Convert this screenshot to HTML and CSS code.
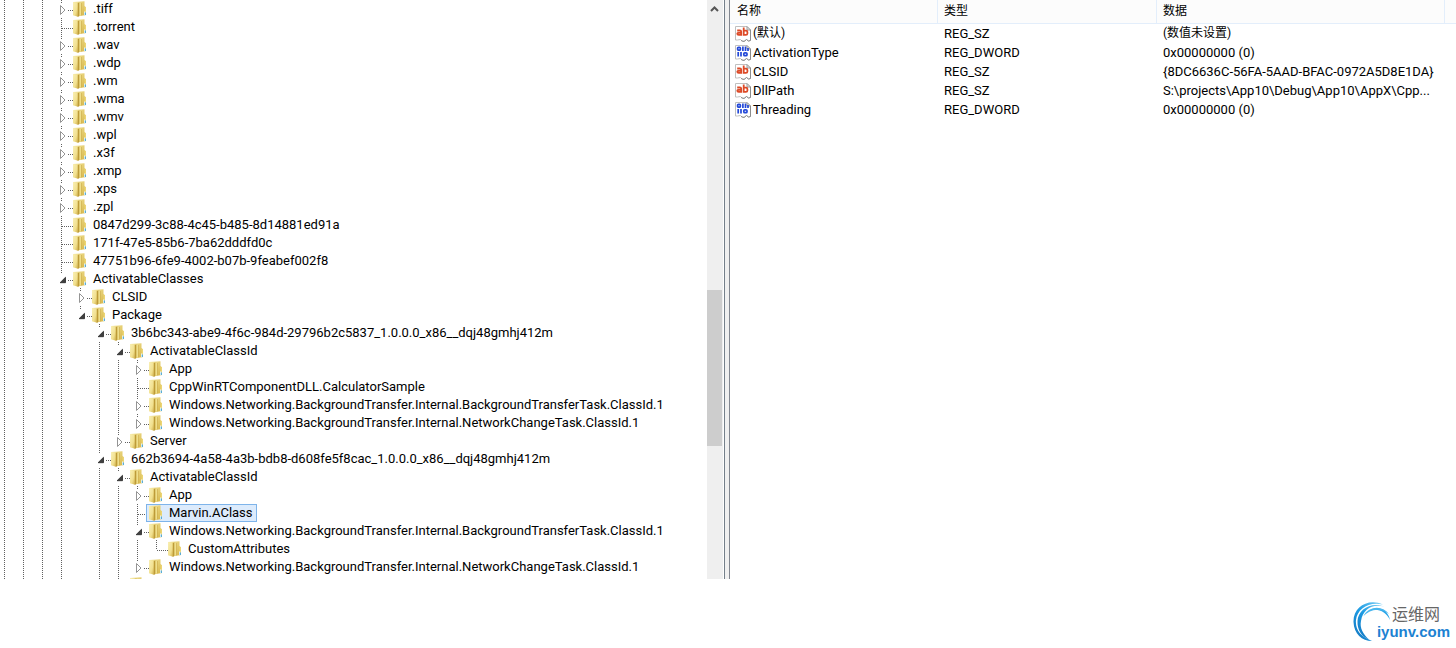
FILE: index.html
```html
<!DOCTYPE html>
<html lang="zh-CN">
<head>
<meta charset="utf-8">
<title>注册表编辑器</title>
<link rel="stylesheet" href="styles.css">
</head>
<body>
<svg class="defs" aria-hidden="true">
  <defs>
    <linearGradient id="gl" x1="0" x2="1" y1="0" y2="1"><stop offset="0" stop-color="#f9efb4"/><stop offset=".6" stop-color="#f1e08f"/><stop offset="1" stop-color="#cfae48"/></linearGradient>
    <linearGradient id="gr" x1="0" x2="1" y1="0" y2="1"><stop offset="0" stop-color="#f3e59a"/><stop offset="1" stop-color="#d6b547"/></linearGradient>
    <symbol id="folder" viewBox="0 0 14 16">
      <path d="M0 1 L11.5 0.3 L11.500 5 L13 6.500 L13 14 L7 15 L0 14 Z" fill="url(#gr)"/>
      <path d="M0 1 L4.500 1.500 L5 15.800 L0 14.300 Z" fill="url(#gl)"/>
      <path d="M4.800 2 L6.500 1.500 L6.500 15 L4.800 16 Z" fill="#bd9b38"/>
      <path d="M6.500 1.500 L8 2 L8 14.500 L6.500 15 Z" fill="#efdf8c"/>
      <path d="M8 2h.6v12.300h-.6z" fill="#cdae4e"/>
      <path d="M11.500 5 L13 6.500 L13 14 L11.500 14.300 Z" fill="#ecd574"/>
      <path d="M11 10.500h1.300v3.500h-1.300z" fill="#eaf6fb"/>
      <path d="M11.800 11.500h1.100v2.500h-1.100z" fill="#4ba7dc"/>
    </symbol>
    <symbol id="page" viewBox="0 0 16 16">
      <path d="M0.500 0.500h11.500l3.500 3.500v10.500l-2 0.500-2-1.500-2 1.500-2 0.500-2-2-3 0.500h-2z" fill="#fff" stroke="#c0c0c0"/>
      <path d="M12 0.500v3.500h3.500z" fill="#eee" stroke="#9a9a9a"/>
      <path d="M15.500 4v10.500l-2 0.500-2-1.500-2.500 2-3-1" fill="none" stroke="#8c8c8c"/>
    </symbol>
    <symbol id="str" viewBox="0 0 16 16">
      <use href="#page"/>
      <g fill="none" stroke="#dd4a27" stroke-width="1.800">
        <path d="M2.200 4.500h2.600q1.400 0 1.400 1.300v3.900M6.200 6.800h-2.500q-1.400 0-1.400 1t1.400 1h2.500"/>
        <path d="M8.700 1.500v8.200M8.700 4.700h2.200q1.500 0 1.500 1.400v1.300q0 1.400-1.500 1.400h-2.200"/>
      </g>
    </symbol>
    <symbol id="bin" viewBox="0 0 16 16">
      <use href="#page"/>
      <g fill="none" stroke="#2348d8" stroke-width="1.700">
        <rect x="2.600" y="2.300" width="2.800" height="2.900" rx="1"/>
        <path d="M7.900 1.500v4.500M10.500 1.500v4.500M13 3v3"/>
        <path d="M3.200 7v4.500M6 7v4.500"/>
        <rect x="8.800" y="7.800" width="3.200" height="2.900" rx="1"/>
      </g>
    </symbol>
    <symbol id="shut" viewBox="0 0 8 12"><path d="M1.500 1.500 L6 6 L1.500 10.500 Z" fill="#fff" stroke="#949494"/></symbol>
    <symbol id="open" viewBox="0 0 8 12"><path d="M6.500 3.300 V8.700 H1.100 Z" fill="#404040" stroke="#262626" stroke-width=".8"/></symbol>
  </defs>
</svg>

<main class="window">
  <nav class="tree" aria-label="注册表项">
    <ul class="level root">
      <li><div class="row"><button class="toggle" aria-label="展开"><svg><use href="#shut"/></svg></button><span class="node"><svg><use href="#folder"/></svg>.tiff</span></div></li>
      <li><div class="row"><span class="branch"></span><span class="node"><svg><use href="#folder"/></svg>.torrent</span></div></li>
      <li><div class="row"><button class="toggle" aria-label="展开"><svg><use href="#shut"/></svg></button><span class="node"><svg><use href="#folder"/></svg>.wav</span></div></li>
      <li><div class="row"><button class="toggle" aria-label="展开"><svg><use href="#shut"/></svg></button><span class="node"><svg><use href="#folder"/></svg>.wdp</span></div></li>
      <li><div class="row"><button class="toggle" aria-label="展开"><svg><use href="#shut"/></svg></button><span class="node"><svg><use href="#folder"/></svg>.wm</span></div></li>
      <li><div class="row"><button class="toggle" aria-label="展开"><svg><use href="#shut"/></svg></button><span class="node"><svg><use href="#folder"/></svg>.wma</span></div></li>
      <li><div class="row"><button class="toggle" aria-label="展开"><svg><use href="#shut"/></svg></button><span class="node"><svg><use href="#folder"/></svg>.wmv</span></div></li>
      <li><div class="row"><button class="toggle" aria-label="展开"><svg><use href="#shut"/></svg></button><span class="node"><svg><use href="#folder"/></svg>.wpl</span></div></li>
      <li><div class="row"><button class="toggle" aria-label="展开"><svg><use href="#shut"/></svg></button><span class="node"><svg><use href="#folder"/></svg>.x3f</span></div></li>
      <li><div class="row"><button class="toggle" aria-label="展开"><svg><use href="#shut"/></svg></button><span class="node"><svg><use href="#folder"/></svg>.xmp</span></div></li>
      <li><div class="row"><button class="toggle" aria-label="展开"><svg><use href="#shut"/></svg></button><span class="node"><svg><use href="#folder"/></svg>.xps</span></div></li>
      <li><div class="row"><button class="toggle" aria-label="展开"><svg><use href="#shut"/></svg></button><span class="node"><svg><use href="#folder"/></svg>.zpl</span></div></li>
      <li><div class="row"><span class="branch"></span><span class="node"><svg><use href="#folder"/></svg>0847d299-3c88-4c45-b485-8d14881ed91a</span></div></li>
      <li><div class="row"><span class="branch"></span><span class="node"><svg><use href="#folder"/></svg>171f-47e5-85b6-7ba62dddfd0c</span></div></li>
      <li><div class="row"><span class="branch"></span><span class="node"><svg><use href="#folder"/></svg>47751b96-6fe9-4002-b07b-9feabef002f8</span></div></li>
      <li><div class="row"><button class="toggle" aria-label="折叠"><svg><use href="#open"/></svg></button><span class="node"><svg><use href="#folder"/></svg>ActivatableClasses</span></div>
        <ul class="level">
          <li><div class="row"><button class="toggle" aria-label="展开"><svg><use href="#shut"/></svg></button><span class="node"><svg><use href="#folder"/></svg>CLSID</span></div></li>
          <li class="last"><div class="row"><button class="toggle" aria-label="折叠"><svg><use href="#open"/></svg></button><span class="node"><svg><use href="#folder"/></svg>Package</span></div>
            <ul class="level">
              <li><div class="row"><button class="toggle" aria-label="折叠"><svg><use href="#open"/></svg></button><span class="node"><svg><use href="#folder"/></svg>3b6bc343-abe9-4f6c-984d-29796b2c5837_1.0.0.0_x86__dqj48gmhj412m</span></div>
                <ul class="level">
                  <li><div class="row"><button class="toggle" aria-label="折叠"><svg><use href="#open"/></svg></button><span class="node"><svg><use href="#folder"/></svg>ActivatableClassId</span></div>
                    <ul class="level">
                      <li><div class="row"><button class="toggle" aria-label="展开"><svg><use href="#shut"/></svg></button><span class="node"><svg><use href="#folder"/></svg>App</span></div></li>
                      <li><div class="row"><span class="branch"></span><span class="node"><svg><use href="#folder"/></svg>CppWinRTComponentDLL.CalculatorSample</span></div></li>
                      <li><div class="row"><button class="toggle" aria-label="展开"><svg><use href="#shut"/></svg></button><span class="node"><svg><use href="#folder"/></svg>Windows.Networking.BackgroundTransfer.Internal.BackgroundTransferTask.ClassId.1</span></div></li>
                      <li class="last"><div class="row"><button class="toggle" aria-label="展开"><svg><use href="#shut"/></svg></button><span class="node"><svg><use href="#folder"/></svg>Windows.Networking.BackgroundTransfer.Internal.NetworkChangeTask.ClassId.1</span></div></li>
                    </ul>
                  </li>
                  <li class="last"><div class="row"><button class="toggle" aria-label="展开"><svg><use href="#shut"/></svg></button><span class="node"><svg><use href="#folder"/></svg>Server</span></div></li>
                </ul>
              </li>
              <li><div class="row"><button class="toggle" aria-label="折叠"><svg><use href="#open"/></svg></button><span class="node"><svg><use href="#folder"/></svg>662b3694-4a58-4a3b-bdb8-d608fe5f8cac_1.0.0.0_x86__dqj48gmhj412m</span></div>
                <ul class="level">
                  <li><div class="row"><button class="toggle" aria-label="折叠"><svg><use href="#open"/></svg></button><span class="node"><svg><use href="#folder"/></svg>ActivatableClassId</span></div>
                    <ul class="level">
                      <li><div class="row"><button class="toggle" aria-label="展开"><svg><use href="#shut"/></svg></button><span class="node"><svg><use href="#folder"/></svg>App</span></div></li>
                      <li><div class="row"><span class="branch"></span><span class="node selected"><svg><use href="#folder"/></svg>Marvin.AClass</span></div></li>
                      <li><div class="row"><button class="toggle" aria-label="折叠"><svg><use href="#open"/></svg></button><span class="node"><svg><use href="#folder"/></svg>Windows.Networking.BackgroundTransfer.Internal.BackgroundTransferTask.ClassId.1</span></div>
                        <ul class="level">
                          <li class="last"><div class="row"><span class="branch"></span><span class="node"><svg><use href="#folder"/></svg>CustomAttributes</span></div></li>
                        </ul>
                      </li>
                      <li class="last"><div class="row"><button class="toggle" aria-label="展开"><svg><use href="#shut"/></svg></button><span class="node"><svg><use href="#folder"/></svg>Windows.Networking.BackgroundTransfer.Internal.NetworkChangeTask.ClassId.1</span></div></li>
                    </ul>
                  </li>
                  <li class="last"><div class="row"><span class="branch"></span><span class="node"><svg><use href="#folder"/></svg></span></div></li>
                </ul>
              </li>
            </ul>
          </li>
        </ul>
      </li>
    </ul>
  </nav>

  <div class="scrollbar">
    <button class="scroll-up" aria-label="向上滚动"><svg viewBox="0 0 9 6"><path d="M1 5 L4.500 1.500 L8 5" fill="none" stroke="#555" stroke-width="2"/></svg></button>
    <div class="before"></div>
    <div class="thumb"></div>
    <div class="after"></div>
  </div>
  <div class="splitter"></div>

  <section class="values">
    <table>
      <colgroup><col class="c-name"><col class="c-type"><col class="c-data"><col class="c-rest"></colgroup>
      <thead><tr><th class="zh">名称</th><th class="zh">类型</th><th class="zh">数据</th><td></td></tr></thead>
      <tbody>
        <tr><td><span class="value"><svg><use href="#str"/></svg><span class="zh">(默认)</span></span></td><td>REG_SZ</td><td class="zh">(数值未设置)</td><td></td></tr>
        <tr><td><span class="value"><svg><use href="#bin"/></svg>ActivationType</span></td><td>REG_DWORD</td><td>0x00000000 (0)</td><td></td></tr>
        <tr><td><span class="value"><svg><use href="#str"/></svg>CLSID</span></td><td>REG_SZ</td><td>{8DC6636C-56FA-5AAD-BFAC-0972A5D8E1DA}</td><td></td></tr>
        <tr><td><span class="value"><svg><use href="#str"/></svg>DllPath</span></td><td>REG_SZ</td><td>S:\projects\App10\Debug\App10\AppX\Cpp...</td><td></td></tr>
        <tr><td><span class="value"><svg><use href="#bin"/></svg>Threading</span></td><td>REG_DWORD</td><td>0x00000000 (0)</td><td></td></tr>
      </tbody>
    </table>
  </section>
</main>

<footer class="footer">
  <div class="brand">
    <svg class="swirl" viewBox="0 0 38 41" aria-hidden="true">
      <defs><linearGradient id="sw" x1="0" y1="1" x2="1" y2="0"><stop offset="0" stop-color="#1272bd"/><stop offset=".5" stop-color="#1e9de4"/><stop offset="1" stop-color="#7fd0f6"/></linearGradient></defs>
      <path d="M30 3.500 C15 -3 0 6 0.500 21 C1 33 9 40 19 40 C8 36 2 29 3 19 C4 8 16 0 30 3.500 Z" fill="url(#sw)"/>
      <path d="M32 6 C19 0 5 8 4.500 20 C4 29 9 36 16 38.500 C10 33 6.500 27 8 20 C10 8 20 2 32 6 Z" fill="url(#sw)"/>
      <path d="M37 19 C35 8 24 4 16 10 C24 6.500 33 10 37 19 Z" fill="#2aa5e8"/>
      <path d="M36 13 C29 4 16 5 10.500 15 C17 8 27 6 36 13 Z" fill="#49b6ee"/>
    </svg>
    <div class="brand-text"><span class="brand-cn">运维网</span><span class="brand-url">iyunv.com</span></div>
  </div>
</footer>
</body>
</html>
```

FILE: styles.css
```css
* { box-sizing: border-box; }

body {
  margin: 0;
  height: 100vh;
  display: flex;
  flex-direction: column;
  overflow: hidden;
  background: #fff;
  color: #000;
  font: 13px/18px Roboto, "Noto Sans CJK SC", sans-serif;
}

.defs { position: absolute; width: 0; height: 0; }

.window {
  flex: 1;
  min-height: 0;
  display: grid;
  grid-template-columns: 707fr 17px 6px 726fr;
  grid-template-rows: minmax(0, 1fr);
}

.tree { overflow: hidden; }

.level {
  list-style: none;
  margin: 0;
  padding: 0 0 0 19px;
}

.level li {
  background: repeating-linear-gradient(#606060 0 1px, transparent 1px 2px) 4px 0 / 1px 100% no-repeat;
}

.level li.last { background-size: 1px 10px; }

/* ancestor guide lines left of the first visible level */
.root {
  padding-left: 57px;
  background:
    repeating-linear-gradient(#606060 0 1px, transparent 1px 2px) 4px 0 / 1px 100% no-repeat,
    repeating-linear-gradient(#606060 0 1px, transparent 1px 2px) 23px 0 / 1px 100% no-repeat,
    repeating-linear-gradient(#606060 0 1px, transparent 1px 2px) 42px 0 / 1px 100% no-repeat;
}

.row {
  display: flex;
  height: 18px;
  white-space: nowrap;
  background: repeating-linear-gradient(90deg, #606060 0 1px, transparent 1px 2px) 5px 10px / 11px 1px no-repeat;
}

.branch { width: 13px; }

.toggle {
  width: 11px;
  height: 14px;
  margin: 3px 2px 0 0;
  padding: 0 0 0 2px;
  border: 0;
  background: #fff;
  display: flex;
  align-items: center;
}

.toggle svg { width: 8px; height: 12px; }

.node {
  display: flex;
  padding: 0 3px 0 2px;
  border: 1px solid transparent;
  line-height: 16px;
}

.node svg { width: 14px; height: 16px; margin-right: 6px; }

.selected { background: #dcebfc; border-color: #7eb4ea; }

.scrollbar {
  display: flex;
  flex-direction: column;
  background: #efefef;
  border-right: 1px solid #fff;
}

.scroll-up {
  height: 17px;
  margin-right: 1px;
  padding: 0;
  border: 0;
  background: none;
  display: flex;
  align-items: center;
  justify-content: center;
}

.scroll-up svg { width: 9px; height: 6px; }

.before { flex: 273; }
.thumb { flex: 156; margin-right: 1px; background: #cdcdcd; }
.after { flex: 133; }

.splitter {
  background: #f0f0f0;
  border-left: 1px solid #75808a;
  border-right: 1px solid #828790;
}

.values { overflow: hidden; }

table {
  width: 100%;
  table-layout: fixed;
  border-collapse: separate;
  border-spacing: 0;
}

.c-name { width: 208px; }
.c-type { width: 219px; }
.c-data { width: 288px; }

th, td {
  height: 19px;
  padding: 0 0 0 6px;
  line-height: 19px;
  text-align: left;
  font-weight: 400;
  white-space: nowrap;
}

thead th, thead td {
  height: 24px;
  background: #fcfcfc;
  border-bottom: 1px solid #e3eefb;
}

thead th { border-right: 1px solid #e3eefb; }

th:first-child { padding-left: 7px; }
td:first-child { padding-left: 5px; }

.zh { font-size: 12px; }

.value { display: flex; align-items: center; }
.value svg { width: 16px; height: 16px; margin-right: 2px; }

.footer {
  height: 69px;
  padding: 22px 6px 0 0;
  display: flex;
  justify-content: flex-end;
}

.brand { display: flex; align-items: flex-start; }
.swirl { width: 38px; height: 41px; margin-right: -14px; }

.brand-text { display: flex; flex-direction: column; padding-top: 3px; }

.brand-cn {
  align-self: flex-end;
  margin-right: 10px;
  color: #666;
  font: 16px/19px "Noto Sans CJK SC", sans-serif;
}

.brand-url {
  color: #1c82d2;
  font: bold 15px/18px "Liberation Sans", Arial, sans-serif;
}
```
